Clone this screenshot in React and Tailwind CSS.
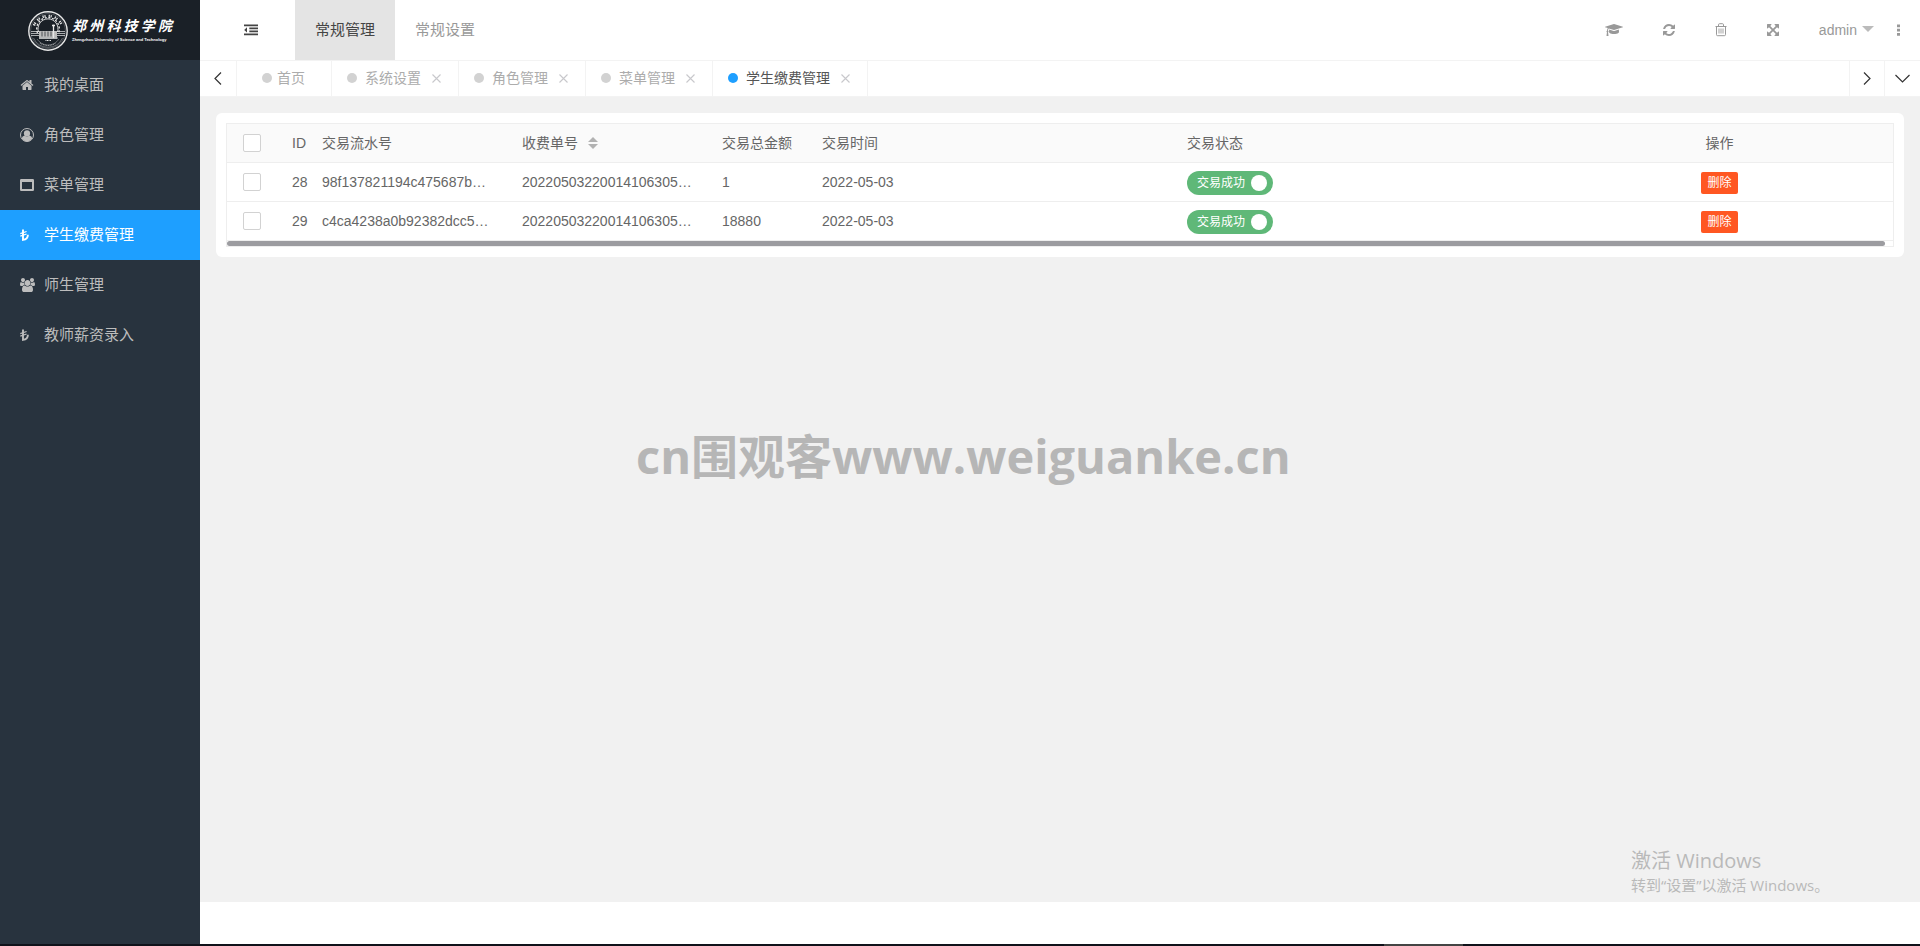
import React, { useState } from "react";

const HomeIcon = () => (
  <svg viewBox="0 0 1792 1792" className="w-[14px] h-[14px]" fill="currentColor">
    <path d="M1472 992v480q0 26-19 45t-45 19h-384v-384h-256v384h-384q-26 0-45-19t-19-45v-480q0-1 .5-3t.5-3l575-474 575 474q1 2 1 6zm223-69l-62 74q-8 9-21 11h-3q-13 0-21-7l-692-577-692 577q-12 8-24 7-13-2-21-11l-62-74q-8-10-7-23.5t11-21.5l719-599q32-26 76-26t76 26l244 204v-195q0-14 9-23t23-9h192q14 0 23 9t9 23v408l219 182q10 8 11 21.5t-7 23.5z" />
  </svg>
);

const UserIcon = () => (
  <svg viewBox="0 0 14 14" className="w-[14px] h-[14px]" fill="currentColor">
    <circle cx="7" cy="7" r="6.5" fill="none" stroke="currentColor" />
    <circle cx="7" cy="5.4" r="3.1" />
    <path d="M1.6 10.6Q2.2 8 4.6 7.6Q7 9.6 9.4 7.6Q11.8 8 12.4 10.6Q10 13.4 7 13.4Q4 13.4 1.6 10.6Z" />
  </svg>
);

const WindowIcon = () => (
  <svg viewBox="0 0 14 14" className="w-[14px] h-[14px]" fill="currentColor" fillRule="evenodd">
    <path d="M1.2 1H12.8Q14 1 14 2.2V11.8Q14 13 12.8 13H1.2Q0 13 0 11.8V2.2Q0 1 1.2 1ZM2 4V11H12V4Z" />
  </svg>
);

const GroupIcon = () => (
  <svg viewBox="0 0 1920 1792" className="w-[15px] h-[14px]" fill="currentColor">
    <path d="M593 896q-162 5-265 128h-134q-82 0-138-40.5t-56-118.5q0-353 124-353 6 0 43.5 21t97.5 42.5 119 21.5q67 0 133-23-5 37-5 66 0 139 81 256zm1071 637q0 120-73 189.5t-194 69.5h-874q-121 0-194-69.5t-73-189.5q0-53 3.5-103.5t14-109 26.5-108.5 43-97.5 62-81 85.5-53.5 111.5-20q10 0 43 21.5t73 48 107 48 135 21.5 135-21.5 107-48 73-48 43-21.5q61 0 111.5 20t85.5 53.5 62 81 43 97.5 26.5 108.5 14 109 3.5 103.5zm-1024-1277q0 106-75 181t-181 75-181-75-75-181 75-181 181-75 181 75 75 181zm704 384q0 159-112.5 271.5t-271.5 112.5-271.5-112.5-112.5-271.5 112.5-271.5 271.5-112.5 271.5 112.5 112.5 271.5zm576 225q0 78-56 118.5t-138 40.5h-134q-103-123-265-128 81-117 81-256 0-29-5-66 66 23 133 23 59 0 119-21.5t97.5-42.5 43.5-21q124 0 124 353zm-128-609q0 106-75 181t-181 75-181-75-75-181 75-181 181-75 181 75 75 181z" />
  </svg>
);

const LiraIcon = () => (
  <svg viewBox="0 0 9 12" className="w-[9px] h-[12px]" fill="none" stroke="currentColor">
    <path d="M3 0.5V10.9Q7.9 10.6 7.9 5.8" strokeWidth="1.9" />
    <path d="M0.3 4.6L6.6 2.5M0.3 7.1L6.6 5" strokeWidth="1.3" />
  </svg>
);

const OutdentIcon = () => (
  <svg viewBox="0 0 14 14" className="w-[14px] h-[14px]" fill="currentColor">
    <path d="M0 1.5H14V3.3H0ZM5.3 4.5H14V6.3H5.3ZM5.3 7.5H14V9.3H5.3ZM0 10.5H14V12.3H0ZM3 4.3V9.5L0.2 6.9Z" />
  </svg>
);

const CapIcon = () => (
  <svg viewBox="0 0 2304 1792" className="w-[18px] h-[14px]" fill="currentColor">
    <path d="M1774 836l18 316q4 69-82 128t-235 93.5-323 34.5-323-34.5-235-93.5-82-128l18-316 574 181q22 7 48 7t48-7zm530-324q0 23-22 31l-1120 352q-4 1-10 1t-10-1l-652-206q-43 34-71 111.5t-34 178.5q63 36 63 109 0 69-58 107l58 433q2 14-8 25-9 11-24 11h-192q-15 0-24-11-10-11-8-25l58-433q-58-38-58-107 0-73 65-111 11-207 98-330l-333-104q-22-8-22-31t22-31l1120-352q4-1 10-1t10 1l1120 352q22 8 22 31z" />
  </svg>
);

const RefreshIcon = () => (
  <svg viewBox="0 0 1792 1792" className="w-[14px] h-[14px]" fill="currentColor">
    <path d="M1639 1056q0 5-1 7-64 268-268 434.5t-478 166.5q-146 0-282.5-55t-243.5-157l-129 129q-19 19-45 19t-45-19-19-45v-448q0-26 19-45t45-19h448q26 0 45 19t19 45-19 45l-137 137q71 66 161 102t187 36q134 0 250-65t186-179q11-17 53-117 8-23 30-23h192q13 0 22.5 9.5t9.5 22.5zm25-800v448q0 26-19 45t-45 19h-448q-26 0-45-19t-19-45 19-45l138-138q-148-137-349-137-134 0-250 65t-186 179q-11 17-53 117-8 23-30 23h-199q-13 0-22.5-9.5t-9.5-22.5v-7q65-268 270-434.5t480-166.5q146 0 284 55.5t245 156.5l130-129q19-19 45-19t45 19 19 45z" />
  </svg>
);

const TrashIcon = () => (
  <svg viewBox="0 0 12 14" className="w-[12px] h-[14px]" fill="none" stroke="currentColor">
    <path d="M0.5 3.5H11.5M3.5 3V1.8Q3.5 0.7 4.5 0.7H7.5Q8.5 0.7 8.5 1.8V3M1.5 3.5V11.6Q1.5 12.7 2.6 12.7H9.4Q10.5 12.7 10.5 11.6V3.5" />
    <path d="M4 5.5V10.5M6 5.5V10.5M8 5.5V10.5" strokeWidth="0.9" />
  </svg>
);

const ExpandIcon = () => (
  <svg viewBox="0 0 1792 1792" className="w-[14px] h-[14px]" fill="currentColor">
    <path d="M1411 541l-355 355 355 355 144-144q29-31 70-14 39 17 39 59v448q0 26-19 45t-45 19h-448q-42 0-59-40-17-39 14-69l144-144-355-355-355 355 144 144q31 30 14 69-17 40-59 40h-448q-26 0-45-19t-19-45v-448q0-42 40-59 39-17 69 14l144 144 355-355-355-355-144 144q-19 19-45 19-12 0-24-5-40-17-40-59v-448q0-26 19-45t45-19h448q42 0 59 40 17 39-14 69l-144 144 355 355 355-355-144-144q-31-30-14-69 17-40 59-40h448q26 0 45 19t19 45v448q0 42-39 59-13 5-25 5-26 0-45-19z" />
  </svg>
);

const DotsIcon = () => (
  <svg viewBox="0 0 3 12" className="w-[3px] h-[12px]" fill="currentColor">
    <path d="M0 0.5H3V3.3H0ZM0 4.7H3V7.5H0ZM0 8.9H3V11.7H0Z" />
  </svg>
);

const Chevron = ({ points, box, className }) => (
  <svg viewBox={box} className={className} fill="none" stroke="#333" strokeWidth="1.2">
    <polyline points={points} />
  </svg>
);

// 校徽
const Emblem = () => (
  <svg viewBox="0 0 40 40" className="w-10 h-10 shrink-0" fill="none" stroke="#e8e8e8">
    <circle cx="20" cy="20" r="19.2" strokeWidth="1.4" />
    <circle cx="20" cy="20" r="17.4" strokeWidth="0.4" opacity="0.6" />
    <path d="M10.5 21A10 10 0 1 1 29.5 21" strokeWidth="0.9" />
    <path d="M9.5 22A11.3 11.3 0 1 1 30.5 22" strokeWidth="1.3" strokeDasharray="2 1.7" />
    <path d="M6 14.5A15 15 0 0 1 34 14.5" strokeWidth="2.4" strokeDasharray="1.3 0.7 1.2 3" />
    <path d="M3 20.5H11M29 20.5H37M3 22.5H11M29 22.5H37M3 24.5H11M29 24.5H37" strokeWidth="1" opacity="0.7" />
    <path d="M11 20H29V26H11Z" fill="#bbb" stroke="none" />
    <path d="M14 20.5V25.5M17 20.5V25.5M20 20.5V25.5M23 20.5V25.5" stroke="#1c2229" strokeWidth="0.7" />
    <path d="M25.5 27V13.5M24 14.5H27M11 27H29.5" strokeWidth="1.3" />
    <path d="M5.5 27A16 16 0 0 0 34.5 27M9 28A13 13 0 0 0 31 28" strokeWidth="0.6" opacity="0.6" />
    <path d="M12 32Q20 37 28 32" strokeWidth="1.2" strokeDasharray="0.9 0.8" opacity="0.6" />
    <path d="M17.5 29.5H23" strokeWidth="1" strokeDasharray="1 0.5" />
  </svg>
);

const menus = [
  { name: "我的桌面", icon: HomeIcon },
  { name: "角色管理", icon: UserIcon },
  { name: "菜单管理", icon: WindowIcon },
  { name: "学生缴费管理", icon: LiraIcon },
  { name: "师生管理", icon: GroupIcon },
  { name: "教师薪资录入", icon: LiraIcon },
];

const tabs = ["系统设置", "角色管理", "菜单管理", "学生缴费管理"];

const rows = [
  { id: 28, serial: "98f137821194c475687b…", bill: "20220503220014106305…", amount: 1, date: "2022-05-03" },
  { id: 29, serial: "c4ca4238a0b92382dcc5…", bill: "20220503220014106305…", amount: 18880, date: "2022-05-03" },
];

const checkboxStyle =
  "block appearance-none w-[18px] h-[18px] bg-white border border-[#d2d2d2] rounded-[2px] checked:bg-[#5fb878]";

const Sidebar = ({ active, setActive }) => (
  <aside className="w-[200px] shrink-0 bg-[#28333e] text-[15px] text-[#bdbdbd]">
    <div className="h-[60px] pl-7 pt-[2px] flex items-center gap-1 bg-[#1a2027] text-white">
      <Emblem />
      <div className="w-[100px]">
        <div className="flex justify-between text-[14px] leading-4 font-bold italic font-['Liberation_Serif','Noto_Sans_CJK_SC',serif]">
          {"郑州科技学院".split("").map((char) => (
            <span key={char}>{char}</span>
          ))}
        </div>
        <p className="mt-[2px] text-[4px] leading-[6px] font-bold whitespace-nowrap font-['Liberation_Sans',sans-serif]">
          Zhengzhou University of Science and Technology
        </p>
      </div>
    </div>
    <nav>
      {menus.map((menu) => (
        <a
          key={menu.name}
          href="#"
          onClick={() => setActive(menu.name)}
          className={`h-[50px] pl-5 flex items-center ${active === menu.name ? "bg-[#1e9fff] text-white" : ""}`}
        >
          <span className="w-6 flex">
            <menu.icon />
          </span>
          {menu.name}
        </a>
      ))}
    </nav>
  </aside>
);

const Header = () => (
  <header className="h-[60px] flex items-center bg-white text-[#999]">
    <button aria-label="收起菜单" className="w-[95px] pl-[7px] flex justify-center text-[#444]">
      <OutdentIcon />
    </button>
    <a href="#" className="h-full px-5 flex items-center text-[15px] bg-[#e4e4e4] text-[#444]">
      常规管理
    </a>
    <a href="#" className="h-full px-5 flex items-center text-[15px]">
      常规设置
    </a>
    <div className="ml-auto pr-5 flex items-center">
      <button aria-label="毕业" className="mr-[39px]"><CapIcon /></button>
      <button aria-label="刷新" className="mr-[39px]"><RefreshIcon /></button>
      <button aria-label="清除" className="mr-[39px]"><TrashIcon /></button>
      <button aria-label="全屏" className="mr-[39px]"><ExpandIcon /></button>
      <button className="mr-[23px] flex items-center gap-[5px] text-sm">
        admin
        <span className="w-0 h-0 -mt-[3px] border-x-[6px] border-x-transparent border-t-[6px] border-t-[#bbb]" />
      </button>
      <button aria-label="更多"><DotsIcon /></button>
    </div>
  </header>
);

const TabBar = ({ active, setActive }) => (
  <div className="h-[37px] flex items-stretch bg-white border-y border-[#f3f3f3] text-sm text-[#acacac]">
    <button aria-label="向左" className="w-[37px] flex items-center justify-center border-r border-[#f3f3f3]">
      <Chevron box="0 0 8 13" points="7,0.5 1,6.5 7,12.5" className="w-[8px] h-[13px]" />
    </button>
    <a href="#" className="w-[95px] pl-[25px] pb-[2px] flex items-center gap-[5px] border-r border-[#f3f3f3]">
      <i className="w-[10px] h-[10px] rounded-full bg-[#d2d2d2]" />
      首页
    </a>
    {tabs.map((tab) => (
      <div
        key={tab}
        className={`px-[15px] pb-[2px] flex items-center border-r border-[#f3f3f3] ${active === tab ? "text-[#555]" : ""}`}
      >
        <a href="#" onClick={() => setActive(tab)} className="flex items-center gap-2">
          <i className={`w-[10px] h-[10px] rounded-full ${active === tab ? "bg-[#1e9fff]" : "bg-[#d2d2d2]"}`} />
          {tab}
        </a>
        <button aria-label={`关闭${tab}`} className="pl-[11px] pr-[2px] pt-[2px]">
          <svg viewBox="0 0 9 9" className="w-[9px] h-[9px]" stroke="#c8c8cc" strokeWidth="1.1">
            <path d="M0.5 0.5L8.5 8.5M8.5 0.5L0.5 8.5" />
          </svg>
        </button>
      </div>
    ))}
    <button aria-label="向右" className="w-[35px] ml-auto flex items-center justify-center border-l border-[#f3f3f3]">
      <Chevron box="0 0 8 13" points="1,0.5 7,6.5 1,12.5" className="w-[8px] h-[13px]" />
    </button>
    <button aria-label="更多标签" className="w-[36px] flex items-center justify-center border-l border-[#f3f3f3]">
      <Chevron box="0 0 15 9" points="0.5,1 7.5,8 14.5,1" className="w-[15px] h-[9px]" />
    </button>
  </div>
);

const PaymentTable = () => {
  const [paid, setPaid] = useState({ 28: true, 29: true });

  return (
    <div className="p-[10px] bg-white rounded-md">
      <div className="border border-[#eee] overflow-hidden">
        <table className="w-[calc(100%+9px)] table-fixed text-sm leading-5 text-[#666] text-left">
          <colgroup>
            <col className="w-[50px]" />
            <col className="w-[30px]" />
            <col className="w-[200px]" />
            <col className="w-[200px]" />
            <col className="w-[100px]" />
            <col />
            <col />
            <col />
          </colgroup>
          <thead>
            <tr className="h-[38px] bg-[#fafafa] border-b border-[#eee] [&>th]:font-normal [&>th]:whitespace-nowrap">
              <th className="pl-4"><input type="checkbox" aria-label="全选" className={checkboxStyle} /></th>
              <th className="pl-[15px]">ID</th>
              <th className="pl-[15px]">交易流水号</th>
              <th className="pl-[15px]">
                <button className="flex items-center gap-[10px]">
                  收费单号
                  <span className="flex flex-col gap-[2px]">
                    <i className="border-x-[5px] border-x-transparent border-b-[5px] border-b-[#b2b2b2]" />
                    <i className="border-x-[5px] border-x-transparent border-t-[5px] border-t-[#b2b2b2]" />
                  </span>
                </button>
              </th>
              <th className="pl-[15px]">交易总金额</th>
              <th className="pl-[15px]">交易时间</th>
              <th className="pl-[15px]">交易状态</th>
              <th className="text-center">操作</th>
            </tr>
          </thead>
          <tbody>
            {rows.map((row) => (
              <tr key={row.id} className="h-[39px] border-b border-[#eee]">
                <td className="pl-4"><input type="checkbox" aria-label={`选择${row.id}`} className={checkboxStyle} /></td>
                <td className="pl-[15px]">{row.id}</td>
                <td className="pl-[15px]">{row.serial}</td>
                <td className="pl-[15px]">{row.bill}</td>
                <td className="pl-[15px]">{row.amount}</td>
                <td className="pl-[15px]">{row.date}</td>
                <td className="pl-[15px] pt-[2px]">
                  <label
                    className={`w-[86px] h-6 pl-[10px] pr-[6px] flex items-center justify-between rounded-full text-xs text-white ${paid[row.id] ? "bg-[#5fb878]" : "bg-[#d2d2d2]"}`}
                  >
                    <input
                      type="checkbox"
                      className="sr-only"
                      checked={paid[row.id]}
                      onChange={(e) => setPaid({ ...paid, [row.id]: e.target.checked })}
                    />
                    交易成功
                    <i className="w-4 h-4 rounded-full bg-white" />
                  </label>
                </td>
                <td className="text-center pt-[2px]">
                  <button className="block mx-auto h-[22px] px-[6px] rounded-[2px] bg-[#ff5722] text-xs leading-[22px] text-white">
                    删除
                  </button>
                </td>
              </tr>
            ))}
          </tbody>
        </table>
        <div className="h-[5px] mr-2 rounded-sm bg-[#9c9ca0]" />
      </div>
    </div>
  );
};

const App = () => {
  const [active, setActive] = useState("学生缴费管理");

  return (
    <div className="min-h-screen flex flex-col bg-white font-['Liberation_Sans','Noto_Sans_CJK_SC',sans-serif]">
      <div className="flex-1 flex">
        <Sidebar active={active} setActive={setActive} />
        <div className="flex-1 min-w-0 flex flex-col">
          <Header />
          <TabBar active={active} setActive={setActive} />
          <main className="relative flex-1 px-4 py-4 bg-[#f1f1f1]">
            <PaymentTable />
            <p className="absolute left-[436px] bottom-[416px] text-[47px] leading-[60px] font-bold text-[#b6b6b6] whitespace-nowrap font-['Open_Sans','Noto_Sans_CJK_SC',sans-serif]">
              cn围观客www.weiguanke.cn
            </p>
            <div className="absolute right-[93px] bottom-[7px] w-[196px] text-[#b9b9b9] whitespace-nowrap font-['Open_Sans','Noto_Sans_CJK_SC',sans-serif]">
              <p className="text-[20px] leading-7">激活 Windows</p>
              <p className="text-[15px] leading-5">转到“设置”以激活 Windows。</p>
            </div>
          </main>
          <footer className="h-[42px] bg-white" />
        </div>
      </div>
      <div className="h-[2px] flex justify-end bg-[#10121a]">
        <span className="w-[79px] mr-[457px] bg-[#444]" />
      </div>
    </div>
  );
};

export default App;
